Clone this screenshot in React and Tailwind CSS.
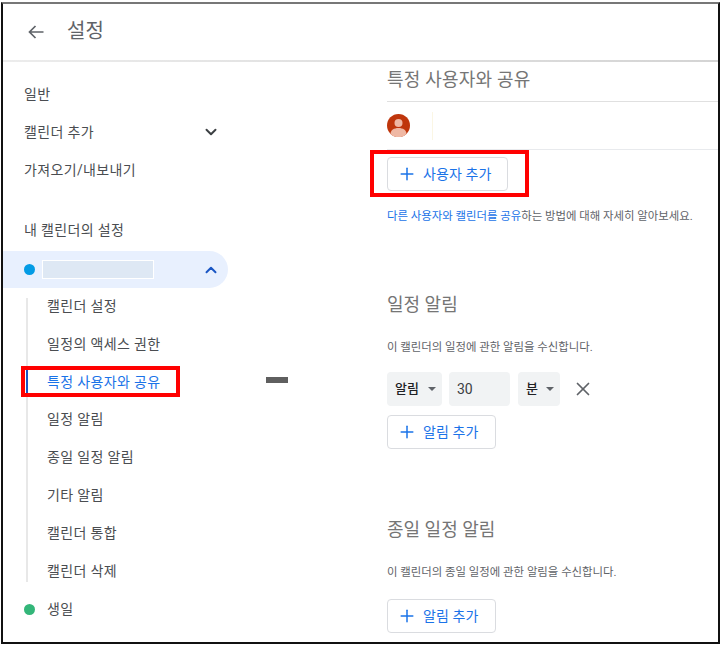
import React from "react";
import { ChevronDown, ChevronUp, Plus, X } from "lucide-react";

const font = "[font-family:'Roboto','Noto_Sans_CJK_KR',sans-serif]";

function TopItem({ children, right }) {
  return (
    <div className="h-[38px] pl-[23px] pr-[8px] w-[227px] flex items-center justify-between text-[14px] tracking-[0.35px] text-[#4a4d51]">
      <span>{children}</span>
      {right}
    </div>
  );
}

function SubItem({ children, active, first, last }) {
  const size = first
    ? "mt-[10px] h-[27.5px] pb-[11px]"
    : last
    ? "h-[30px] pt-[8px] mb-[8px]"
    : "h-[37.8px]";
  return (
    <div className={`relative ${size} pl-[19px] flex items-center border-l-2 border-[#e8e8e8] text-[14px] tracking-[0.35px] ${active ? "text-[#1a73e8]" : "text-[#4a4d51]"}`}>
      {active && <span className="absolute left-[-2px] top-[6px] w-[2px] h-[26px] bg-[#1a56c4]" />}
      {children}
    </div>
  );
}

function AddButton({ label, width }) {
  return (
    <button className={`h-[34px] ${width} flex items-center border border-[#dadce0] rounded-[4px] bg-white pl-[9px] gap-[6px] text-[14px] tracking-[0.1px] text-[#1a73e8]`}>
      <Plus size={20} strokeWidth={1.8} />
      <span>{label}</span>
    </button>
  );
}

function Caret() {
  return <span className="inline-block w-0 h-0 border-x-[4px] border-x-transparent border-t-[4px] border-t-[#5f6368]" />;
}

export default function App() {
  return (
    <div className={`w-[722px] h-[647px] bg-white pl-[1px] pt-[2px] pb-[3px] pr-[2px] ${font}`}>
      <div className="h-full border-2 border-[#111] border-t-[#777] flex flex-col overflow-hidden">
        <header className="h-[58px] shrink-0 flex flex-col">
          <div className="flex-1 flex items-center pl-[25px] gap-[23px]">
            <svg width="16" height="14" viewBox="0 0 16 14" fill="none" stroke="#5f6368" strokeWidth="1.7">
              <path d="M15.5 7H1.5M7.5 1L1.5 7L7.5 13" />
            </svg>
            <h1 className="pb-[2px] text-[20px] font-normal text-[#5f6368]">설정</h1>
          </div>
          <div className="h-[2px] bg-gradient-to-r from-[#ececec] to-[#d4d4d4]" />
        </header>
        <div className="flex flex-1 min-h-0">
          <nav className="w-[226px] shrink-0 pt-[13px] -ml-[2px]">
            <TopItem>일반</TopItem>
            <TopItem right={<ChevronDown size={18} strokeWidth={2.6} className="text-[#3c4043]" />}>캘린더 추가</TopItem>
            <TopItem>가져오기/내보내기</TopItem>
            <div className="h-[22px]" />
            <TopItem>내 캘린더의 설정</TopItem>
            <div className="mt-[2px] h-[37px] w-[227px] bg-[#e8f0fe] rounded-r-full flex items-center pl-[23px] pr-[8px]">
              <span className="w-[11px] h-[11px] rounded-full bg-[#039be5]" />
              <span className="ml-[7px] w-[112px] h-[19px] bg-[#dee8f4] border border-white" />
              <ChevronUp size={18} strokeWidth={2.6} className="ml-auto text-[#1a56c4]" />
            </div>
            <div className="ml-[25px]">
              <SubItem first>캘린더 설정</SubItem>
              <SubItem>일정의 액세스 권한</SubItem>
              <div className="relative">
                <SubItem active>특정 사용자와 공유</SubItem>
                <div className="absolute left-[-5px] top-[3px] w-[159px] h-[31px] border-[4px] border-[#ff0000]" />
              </div>
              <SubItem>일정 알림</SubItem>
              <SubItem>종일 일정 알림</SubItem>
              <SubItem>기타 알림</SubItem>
              <SubItem>캘린더 통합</SubItem>
              <SubItem last>캘린더 삭제</SubItem>
            </div>
            <div className="h-[38px] flex items-center pl-[23px] text-[14px] tracking-[0.35px] text-[#4a4d51]">
              <span className="w-[11px] h-[11px] rounded-full bg-[#33b679]" />
              <span className="ml-[12px]">생일</span>
            </div>
          </nav>
          <div className="w-[160px] shrink-0 pt-[315px] pl-[39px]">
            <div className="w-[22px] h-[6px] bg-[#5f5f5f]" />
          </div>
          <main className="flex-1 min-w-0">
            <h2 className="h-[40px] pb-[4px] flex items-center text-[18px] tracking-[0.2px] font-normal text-[#757575] border-b border-[#e0e0e0]">특정 사용자와 공유</h2>
            <div className="h-[48px] flex items-center border-b border-[#e8eaed]">
              <svg width="23" height="23" viewBox="0 0 23 23">
                <circle cx="11.5" cy="11.5" r="11.5" fill="#bf360c" />
                <circle cx="11.5" cy="9" r="4" fill="#efb8a4" />
                <path d="M3.5 20c0-4 3.5-6 8-6s8 2 8 6a11.5 11.5 0 0 1-16 0z" fill="#efb8a4" />
              </svg>
              <span className="ml-[22px] w-px h-[28px] bg-[#fbf6e4]" />
            </div>
            <div className="relative mt-[7px] w-[121px]">
              <AddButton label="사용자 추가" width="w-[121px]" />
              <div className="absolute left-[-17px] top-[-7px] w-[159px] h-[47px] border-[4px] border-[#ff0000]" />
            </div>
            <p className="mt-[17px] text-[11.4px] leading-[16px] text-[#5f6368]">
              <span className="text-[#1a73e8]">다른 사용자와 캘린더를 공유</span>하는 방법에 대해 자세히 알아보세요.
            </p>
            <h2 className="mt-[69px] text-[18px] leading-[24px] font-normal text-[#757575]">일정 알림</h2>
            <p className="mt-[22px] text-[11.4px] leading-[16px] text-[#5f6368]">이 캘린더의 일정에 관한 알림을 수신합니다.</p>
            <div className="mt-[17px] flex items-center h-[34px]">
              <div className="w-[55px] h-full rounded-[4px] bg-[#f1f3f4] flex items-center pl-[8px] gap-[9px] text-[13px] font-medium text-[#202124]">알림 <Caret /></div>
              <div className="ml-[7px] w-[61px] h-full rounded-[4px] bg-[#f1f3f4] flex items-center pl-[8px] text-[14px] text-[#3c4043]">30</div>
              <div className="ml-[8px] w-[42px] h-full rounded-[4px] bg-[#f1f3f4] flex items-center pl-[8px] gap-[8px] text-[13px] font-medium text-[#202124]">분 <Caret /></div>
              <X size={22} strokeWidth={1.9} className="ml-[12px] text-[#5f6368]" />
            </div>
            <div className="mt-[9px]"><AddButton label="알림 추가" width="w-[109px]" /></div>
            <h2 className="mt-[69px] text-[18px] leading-[24px] font-normal text-[#757575]">종일 일정 알림</h2>
            <p className="mt-[22px] text-[11.4px] leading-[16px] text-[#5f6368]">이 캘린더의 종일 일정에 관한 알림을 수신합니다.</p>
            <div className="mt-[19px]"><AddButton label="알림 추가" width="w-[109px]" /></div>
          </main>
        </div>
      </div>
    </div>
  );
}
